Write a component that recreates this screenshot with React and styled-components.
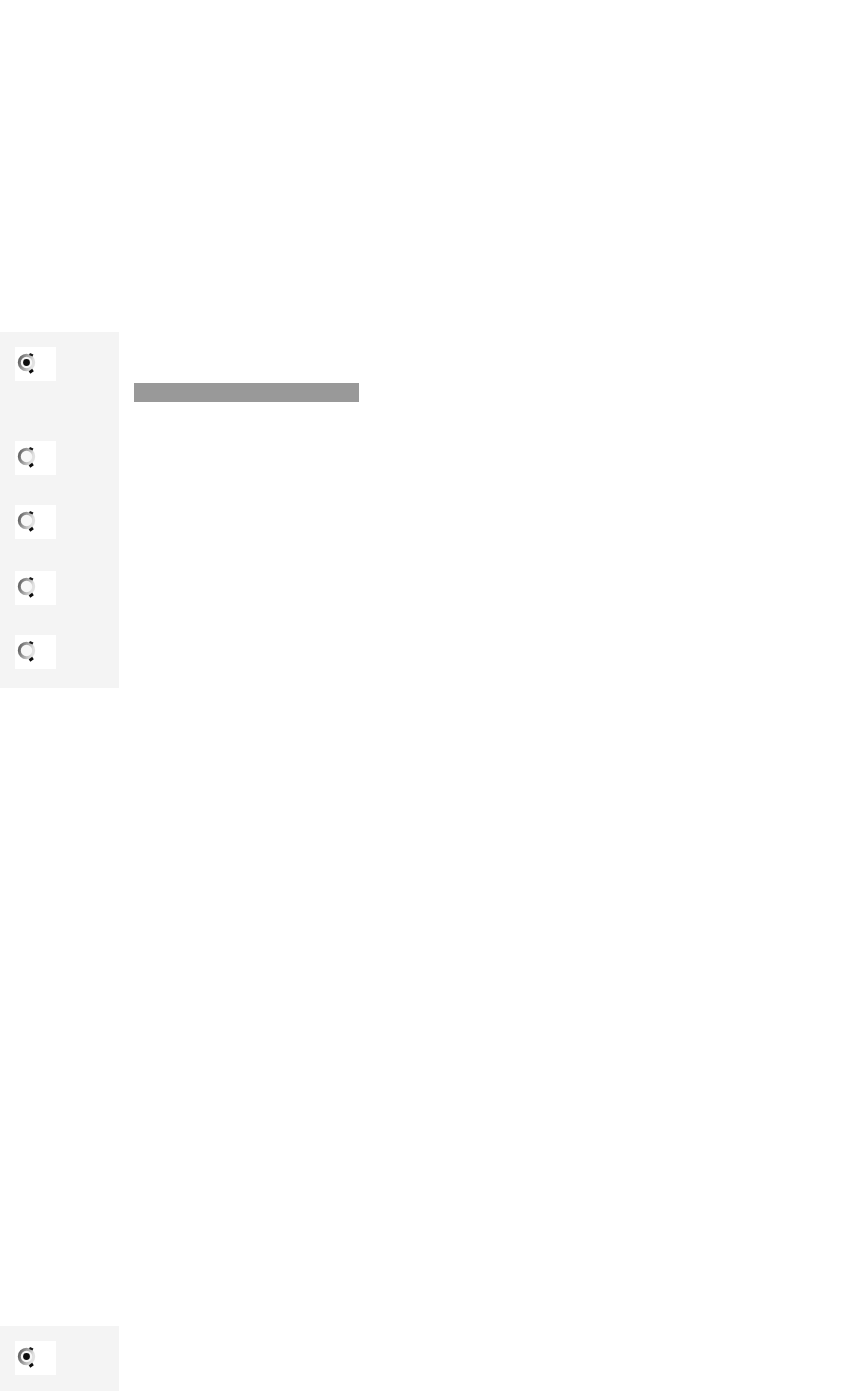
import React from "react";
import styled, { createGlobalStyle } from "styled-components";

const GlobalStyle = createGlobalStyle`
  html, body {
    margin: 0;
    padding: 0;
    background: #ffffff;
    font-family: "Liberation Sans", Arial, sans-serif;
  }
`;

const Page = styled.div`
  display: flex;
  flex-direction: column;
`;

const Spacer = styled.div`
  height: ${(p) => p.$h}px;
`;

const Section = styled.section`
  display: flex;
  height: ${(p) => p.$h}px;
`;

const Sidebar = styled.nav`
  width: 119px;
  flex-shrink: 0;
  background: #f4f4f4;
  display: flex;
  flex-direction: column;
  padding: 15px 0 0 15px;
  box-sizing: border-box;
`;

const OptionBox = styled.div`
  width: 41px;
  height: 34px;
  background: #ffffff;
  margin-top: ${(p) => p.$gap || 0}px;
  padding: 4px 0 0 1px;
  box-sizing: border-box;
  flex-shrink: 0;
`;

const Content = styled.main`
  flex: 1;
  padding: 51px 0 0 15px;
`;

const Bar = styled.div`
  width: 225px;
  height: 19px;
  background: #999999;
`;

const Radio = function ({ checked, id }) {
  return (
    <svg width="22" height="24" viewBox="0 0 22 24">
      <defs>
        <linearGradient id={`ring-${id}`} x1="0" y1="0" x2="1" y2="0.3">
          <stop offset="0" stopColor="#5c5c5c" />
          <stop offset="0.45" stopColor="#9a9a9a" />
          <stop offset="1" stopColor="#e2e2e2" />
        </linearGradient>
      </defs>
      <circle
        cx="10.5"
        cy="11.5"
        r="7.2"
        fill="#f7f7f7"
        stroke={`url(#ring-${id})`}
        strokeWidth="3"
      />
      <path d="M13.5 3 L17 4.5" stroke="#1a1a1a" strokeWidth="2.2" />
      <path d="M13.5 21.5 L17 19" stroke="#0d0d0d" strokeWidth="2.8" />
      {checked && <circle cx="10.5" cy="11.5" r="3.4" fill="#0d0d0d" />}
    </svg>
  );
};

const options = [
  { id: "a", checked: true, gap: 0 },
  { id: "b", checked: false, gap: 60 },
  { id: "c", checked: false, gap: 30 },
  { id: "d", checked: false, gap: 32 },
  { id: "e", checked: false, gap: 30 },
];

export default function App() {
  return (
    <Page>
      <GlobalStyle />
      <Spacer $h={332} />
      <Section $h={356}>
        <Sidebar>
          {options.map((opt) => (
            <OptionBox key={opt.id} $gap={opt.gap}>
              <Radio id={opt.id} checked={opt.checked} />
            </OptionBox>
          ))}
        </Sidebar>
        <Content>
          <Bar />
        </Content>
      </Section>
      <Spacer $h={638} />
      <Section $h={80}>
        <Sidebar>
          <OptionBox>
            <Radio id="f" checked />
          </OptionBox>
        </Sidebar>
      </Section>
    </Page>
  );
}
